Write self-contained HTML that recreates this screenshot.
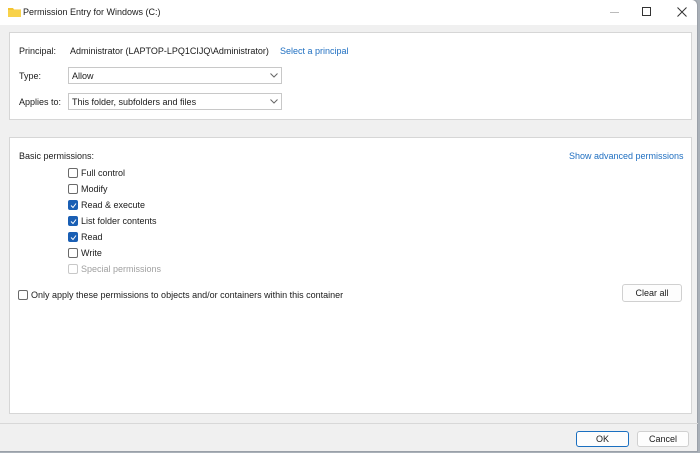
<!DOCTYPE html>
<html><head><style>
*{margin:0;padding:0;box-sizing:border-box}
body{width:700px;height:453px;background:#a9b0b8;font-family:"Liberation Sans",sans-serif;font-size:9px;color:#1a1a1a;position:relative;overflow:hidden}
.win{position:absolute;left:-1px;top:-1px;width:699px;height:453px;background:#f0f0f0;border:1px solid #9aa0a8;border-radius:0 6px 0 0}
.title{position:absolute;left:0;top:0;width:100%;height:25px;background:#fff;border-radius:0 6px 0 0}
.a{position:absolute;white-space:nowrap}
.panel{position:absolute;background:#fff;border:1px solid #d6d6d6}
.sel{position:absolute;background:#fff;border:1px solid #c8c8c8;height:17px;padding:3px 0 0 3px}
.sel svg{position:absolute;right:3px;top:5px}
.cb{position:absolute;width:10px;height:10px;border:1px solid #6a6a6a;border-radius:2px;background:#fff}
.cb.on{background:#1a5fb4;border-color:#1a5fb4}
.cb.dis{border-color:#c8c8c8}
.btn{position:absolute;background:#fdfdfd;border:1px solid #d0d0d0;border-radius:3px;text-align:center;line-height:15px}
.link{color:#1f6fc1}
</style></head><body>
<div class="win">
<div class="title">
<svg class="a" style="left:8px;top:7px" width="13" height="10"><path d="M0 1h5l1 1.5h7V10H0z" fill="#f4c430"/><rect x="0" y="3" width="13" height="7" fill="#f8d24a"/></svg>
<div class="a" style="left:23px;top:7px">Permission Entry for Windows (C:)</div>
<div class="a" style="left:610px;top:12px;width:9px;height:1px;background:#bbb"></div>
<div class="a" style="left:642px;top:7px;width:9px;height:9px;border:1px solid #333"></div>
<svg class="a" style="left:677px;top:7px" width="10" height="10"><path d="M0.5 0.5L9.5 9.5M9.5 0.5L0.5 9.5" stroke="#333" stroke-width="1"/></svg>
</div>
<div class="panel" style="left:9px;top:32px;width:683px;height:88px"></div>
<div class="a" style="left:19px;top:46px">Principal:</div>
<div class="a" style="left:70px;top:46px">Administrator (LAPTOP-LPQ1CIJQ\Administrator)</div>
<div class="a link" style="left:280px;top:46px">Select a principal</div>
<div class="a" style="left:19px;top:71px">Type:</div>
<div class="sel" style="left:68px;top:67px;width:214px">Allow<svg width="8" height="5"><path d="M0.5 0.5L4 4L7.5 0.5" fill="none" stroke="#666"/></svg></div>
<div class="a" style="left:19px;top:97px">Applies to:</div>
<div class="sel" style="left:68px;top:93px;width:214px">This folder, subfolders and files<svg width="8" height="5"><path d="M0.5 0.5L4 4L7.5 0.5" fill="none" stroke="#666"/></svg></div>

<div class="panel" style="left:9px;top:137px;width:683px;height:277px"></div>
<div class="a" style="left:19px;top:151px">Basic permissions:</div>
<div class="a link" style="left:569px;top:151px">Show advanced permissions</div>

<div class="cb" style="left:68px;top:168px"></div><div class="a" style="left:81px;top:168px">Full control</div>
<div class="cb" style="left:68px;top:184px"></div><div class="a" style="left:81px;top:184px">Modify</div>
<div class="cb on" style="left:68px;top:200px"><svg style="position:absolute;left:1px;top:1px" width="7" height="7"><path d="M1 3.5L3 5.5L6 1.5" fill="none" stroke="#fff" stroke-width="1"/></svg></div><div class="a" style="left:81px;top:200px">Read &amp; execute</div>
<div class="cb on" style="left:68px;top:216px"><svg style="position:absolute;left:1px;top:1px" width="7" height="7"><path d="M1 3.5L3 5.5L6 1.5" fill="none" stroke="#fff" stroke-width="1"/></svg></div><div class="a" style="left:81px;top:216px">List folder contents</div>
<div class="cb on" style="left:68px;top:232px"><svg style="position:absolute;left:1px;top:1px" width="7" height="7"><path d="M1 3.5L3 5.5L6 1.5" fill="none" stroke="#fff" stroke-width="1"/></svg></div><div class="a" style="left:81px;top:232px">Read</div>
<div class="cb" style="left:68px;top:248px"></div><div class="a" style="left:81px;top:248px">Write</div>
<div class="cb dis" style="left:68px;top:264px"></div><div class="a" style="left:81px;top:264px;color:#a0a0a0">Special permissions</div>
<div class="cb" style="left:18px;top:290px"></div><div class="a" style="left:31px;top:290px">Only apply these permissions to objects and/or containers within this container</div>
<div class="btn" style="left:622px;top:284px;width:60px;height:18px;line-height:16px">Clear all</div>

<div class="a" style="left:0;top:423px;width:698px;height:1px;background:#d8d8d8"></div>
<div class="btn" style="left:576px;top:431px;width:53px;height:16px;border-color:#1a6fc0">OK</div>
<div class="btn" style="left:637px;top:431px;width:52px;height:16px">Cancel</div>
</div>
</body></html>
